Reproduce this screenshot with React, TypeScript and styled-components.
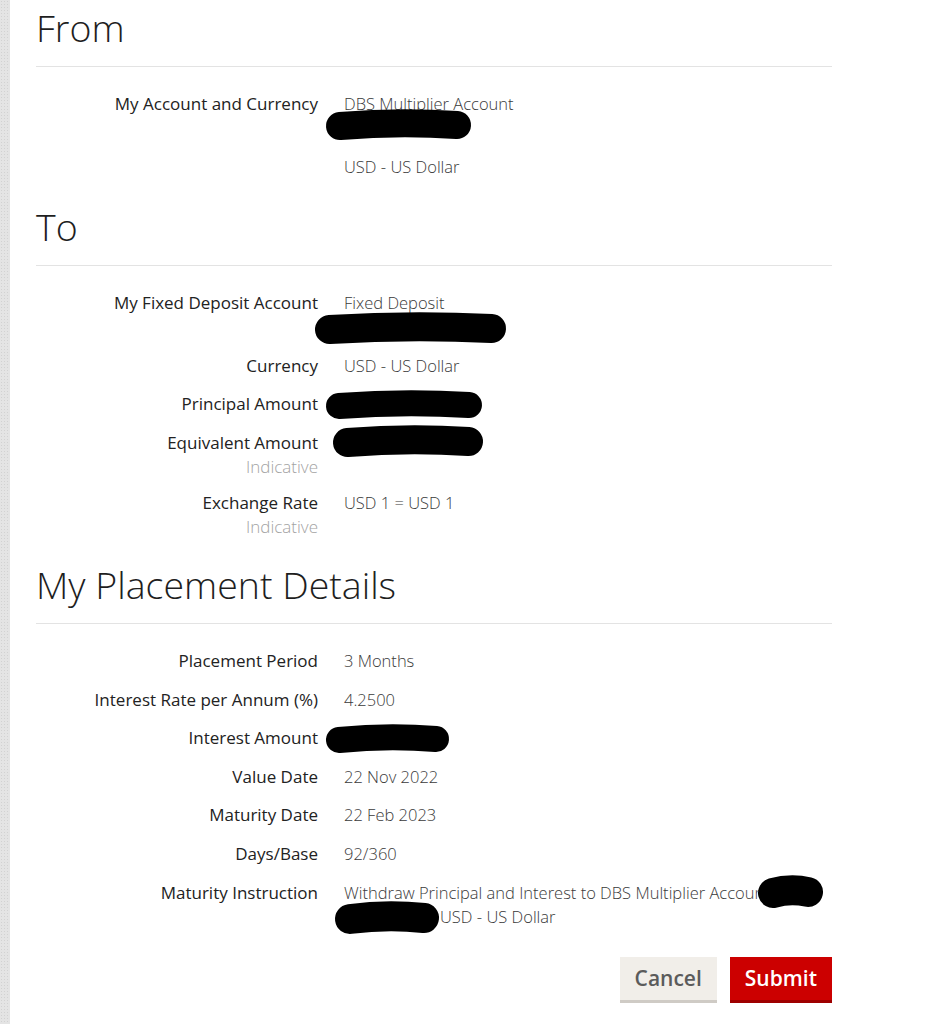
import React from 'react';
import styled, { createGlobalStyle } from 'styled-components';

const GlobalStyle = createGlobalStyle`
  html, body {
    margin: 0;
    padding: 0;
    background: #fff;
  }
  body {
    font-family: "Open Sans", "Noto Sans", "Liberation Sans", sans-serif;
    -webkit-font-smoothing: antialiased;
  }
`;

const Page = styled.div`
  display: flex;
  min-height: 1024px;
`;

const Stripe = styled.div`
  width: 10px;
  flex: none;
  background-color: #e4e4e4;
  background-image: radial-gradient(#d2d2d2 0.8px, transparent 0.9px);
  background-size: 3px 3px;
`;

const Content = styled.div`
  width: 796px;
  padding: 4px 0 0 26px;
`;

const Section = styled.section`
  padding-bottom: 10px;
`;

const Heading = styled.h2`
  margin: 0;
  font-size: 37.5px;
  line-height: 48px;
  font-weight: 300;
  color: #1e1e1e;
`;

const Rule = styled.hr`
  margin: 14px 0 25px;
  border: 0;
  border-top: 1px solid #e3e3e3;
`;

const Row = styled.div<{ $tight?: boolean }>`
  display: grid;
  grid-template-columns: 282px 1fr;
  column-gap: 26px;
  line-height: 24px;
  margin-bottom: ${(p) => (p.$tight ? 12 : 14.6)}px;
`;

const Label = styled.div`
  text-align: right;
  color: #222;
  font-size: 17px;
  font-weight: 400;
`;

const Hint = styled.div`
  color: #a3a3a3;
  font-weight: 300;
`;

const Value = styled.div`
  position: relative;
  color: #3a3a3a;
  font-size: 16.5px;
  font-weight: 300;
`;

const Line = styled.div<{ $indent?: number }>`
  min-height: 24px;
  padding-left: ${(p) => p.$indent ?? 0}px;
`;

const Mark = styled.svg<{ $left: number; $top: number }>`
  position: absolute;
  left: ${(p) => p.$left}px;
  top: ${(p) => p.$top}px;
  overflow: visible;
`;

const Scribble: React.FC<{ left: number; top: number; w: number; h: number }> = ({
  left,
  top,
  w,
  h,
}) => {
  const r = h / 2;
  return (
    <Mark $left={left} $top={top} width={w} height={h}>
      <path
        d={`M ${r} ${r + 1} Q ${w / 2} ${r - 4} ${w - r} ${r}`}
        stroke="#000"
        strokeWidth={h - 2}
        strokeLinecap="round"
        fill="none"
      />
    </Mark>
  );
};

const Actions = styled.div`
  display: flex;
  justify-content: flex-end;
  gap: 13px;
  margin-top: 28px;
`;

const Button = styled.button<{ $primary?: boolean }>`
  height: 46px;
  padding: 0 15px;
  border: 0;
  border-bottom: 3px solid ${(p) => (p.$primary ? '#9e0000' : '#cfcbc5')};
  background: ${(p) => (p.$primary ? '#cc0000' : '#f1eee9')};
  color: ${(p) => (p.$primary ? '#fff' : '#5b5b5b')};
  font-family: inherit;
  font-size: 21px;
  font-weight: 600;
  cursor: pointer;
`;

const App: React.FC = () => {
  return (
    <Page>
      <GlobalStyle />
      <Stripe />
      <Content>
        <Section>
          <Heading>From</Heading>
          <Rule />
          <Row>
            <Label>My Account and Currency</Label>
            <Value>
              <Line>DBS Multiplier Account</Line>
              <Line />
              <Scribble left={-19} top={18} w={147} h={30} />
            </Value>
          </Row>
          <Row>
            <Label />
            <Value>USD - US Dollar</Value>
          </Row>
        </Section>

        <Section>
          <Heading>To</Heading>
          <Rule />
          <Row>
            <Label>My Fixed Deposit Account</Label>
            <Value>
              <Line>Fixed Deposit</Line>
              <Line />
              <Scribble left={-30} top={22} w={193} h={31} />
            </Value>
          </Row>
          <Row>
            <Label>Currency</Label>
            <Value>USD - US Dollar</Value>
          </Row>
          <Row>
            <Label>Principal Amount</Label>
            <Value>
              <Scribble left={-19} top={-1} w={158} h={28} />
            </Value>
          </Row>
          <Row $tight>
            <Label>
              Equivalent Amount
              <Hint>Indicative</Hint>
            </Label>
            <Value>
              <Scribble left={-12} top={-5} w={152} h={31} />
            </Value>
          </Row>
          <Row $tight>
            <Label>
              Exchange Rate
              <Hint>Indicative</Hint>
            </Label>
            <Value>USD 1 = USD 1</Value>
          </Row>
        </Section>

        <Section>
          <Heading>My Placement Details</Heading>
          <Rule />
          <Row>
            <Label>Placement Period</Label>
            <Value>3 Months</Value>
          </Row>
          <Row>
            <Label>Interest Rate per Annum (%)</Label>
            <Value>4.2500</Value>
          </Row>
          <Row>
            <Label>Interest Amount</Label>
            <Value>
              <Scribble left={-19} top={-1} w={125} h={28} />
            </Value>
          </Row>
          <Row>
            <Label>Value Date</Label>
            <Value>22 Nov 2022</Value>
          </Row>
          <Row>
            <Label>Maturity Date</Label>
            <Value>22 Feb 2023</Value>
          </Row>
          <Row>
            <Label>Days/Base</Label>
            <Value>92/360</Value>
          </Row>
          <Row>
            <Label>Maturity Instruction</Label>
            <Value>
              <Line>Withdraw Principal and Interest to DBS Multiplier Accoun</Line>
              <Line $indent={96}>USD - US Dollar</Line>
              <Scribble left={413} top={-5} w={67} h={32} />
              <Scribble left={-10} top={21} w={106} h={32} />
            </Value>
          </Row>
          <Actions>
            <Button>Cancel</Button>
            <Button $primary>Submit</Button>
          </Actions>
        </Section>
      </Content>
    </Page>
  );
};

export default App;
